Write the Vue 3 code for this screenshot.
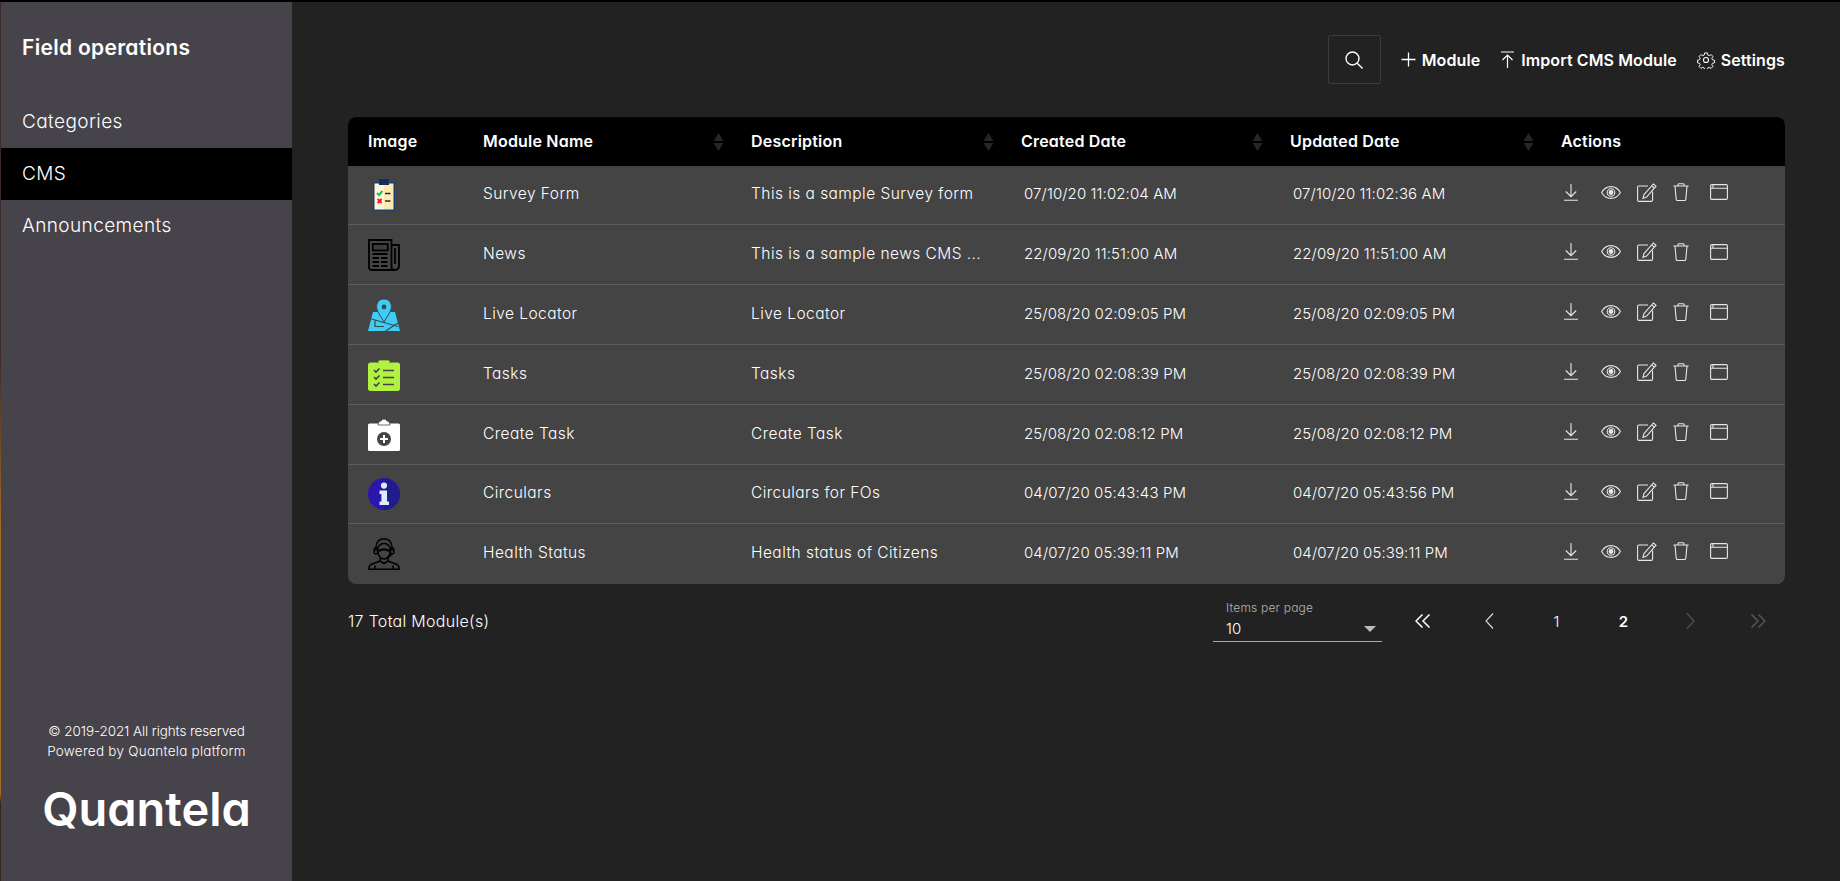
<template>
  <div class="app">
    <aside class="sidebar">
      <h1 class="title">Field operations</h1>
      <nav class="menu">
        <a
          v-for="item in menu"
          :key="item"
          class="menu-item"
          :class="{ active: item === 'CMS' }"
        >
          {{ item }}
        </a>
      </nav>
      <div class="side-footer">
        <p class="copyright">© 2019-2021 All rights reserved</p>
        <p>Powered by Quantela platform</p>
        <div class="logo">Quantela</div>
      </div>
    </aside>

    <main class="content">
      <div class="toolbar">
        <button class="search-btn">
          <svg width="20" height="20" viewBox="0 0 20 20" fill="none" stroke="#fff" stroke-width="1.4">
            <circle cx="8.5" cy="8.5" r="6.5" />
            <path d="M13.2 13.2 L18.6 18.6" />
          </svg>
        </button>
        <a class="tool">
          <svg width="15" height="15" viewBox="0 0 15 15" fill="none" stroke="#fff" stroke-width="1.3">
            <path d="M7.5 0.5 V14.5 M0.5 7.5 H14.5" />
          </svg>
          Module
        </a>
        <a class="tool">
          <svg width="15" height="18" viewBox="0 0 15 18" fill="none" stroke="#fff" stroke-width="1.2">
            <path d="M1 1 H14 M7.5 17 V4 M2.5 9 L7.5 4 L12.5 9" />
          </svg>
          Import CMS Module
        </a>
        <a class="tool">
          <svg width="18" height="18" viewBox="0 0 24 24" fill="none" stroke="#fff" stroke-width="1.4" stroke-linejoin="round">
            <circle cx="12" cy="12" r="3.4" />
            <path d="M10 1.5 h4 l.6 3.1 2.2 1 2.7-1.7 2.8 2.9 -1.7 2.6 .9 2.2 3 .6 v4 l-3 .6 -.9 2.2 1.7 2.6 -2.8 2.9 -2.7-1.7 -2.2 1 -.6 3.1 h-4 l-.6-3.1 -2.2-1 -2.7 1.7 -2.8-2.9 1.7-2.6 -.9-2.2 -3-.6 v-4 l3-.6 .9-2.2 -1.7-2.6 2.8-2.9 2.7 1.7 2.2-1 z" transform="translate(1.2 1.2) scale(.9)" />
          </svg>
          Settings
        </a>
      </div>

      <table class="grid">
        <colgroup>
          <col class="c-image" />
          <col class="c-name" />
          <col class="c-desc" />
          <col class="c-created" />
          <col class="c-updated" />
          <col class="c-actions" />
        </colgroup>
        <thead>
          <tr>
            <th class="first"><span class="th-label">Image</span></th>
            <th v-for="h in sortable" :key="h">
              <div class="th-inner">
                <span class="th-label">{{ h }}</span>
                <svg class="sort" width="11" height="20" viewBox="0 0 11 20" fill="#262626">
                  <path d="M5.5 1 L10.5 9 H0.5 Z M0.5 11 H10.5 L5.5 19 Z" />
                </svg>
              </div>
            </th>
            <th><span class="th-label">Actions</span></th>
          </tr>
        </thead>
        <tbody>
          <tr v-for="row in rows" :key="row.name">
            <td class="first">
              <!-- module pictures -->
              <svg v-if="row.icon === 'survey'" class="thumb" viewBox="0 0 32 32">
                <rect x="5" y="3" width="22" height="29" rx="1" fill="#1a3f72" />
                <rect x="6.5" y="4.5" width="9.5" height="26" fill="#fff6d8" />
                <rect x="16" y="4.5" width="9.5" height="26" fill="#ffe7ae" />
                <rect x="11" y="0" width="10" height="6" fill="#12305e" />
                <path d="M9 14 l2 2 3.5-4" stroke="#17c45a" stroke-width="1.9" fill="none" />
                <path d="M9.6 20 l4 4 M13.6 20 l-4 4" stroke="#f01c1c" stroke-width="1.9" />
                <path d="M17 14.5 h5.5 M17 22 h5.5" stroke="#12305e" stroke-width="1.5" />
              </svg>
              <svg v-else-if="row.icon === 'news'" class="thumb" viewBox="0 0 32 32" fill="none" stroke="#000" stroke-width="1.8">
                <path d="M26 31 H3.5 Q1 31 1 28 V1 H23.5 V28 Q23.5 31 26 31 Q31 31 31 27 V6 H23.5" />
                <path d="M27 9 V25" />
                <rect x="4.8" y="5" width="15" height="6.5" fill="#3d3d3d" />
                <path d="M4.5 15 h15 M4.5 19 h6.5 M13 19 h6.5 M4.5 23 h6.5 M13 23 h6.5 M4.5 27 h6.5 M13 27 h6.5" stroke-width="2" />
              </svg>
              <svg v-else-if="row.icon === 'locator'" class="thumb" viewBox="0 0 32 32">
                <path d="M5 13 H27 L32 32 H0 Z" fill="#3ecdf6" />
                <path d="M3.5 20 L30 27.5 M17.5 32 L30 24 M7 21 V27.5 H16" fill="none" stroke="#444" stroke-width="1.2" />
                <path d="M16 0 C10.8 0 8.6 4 8.6 7.8 C8.6 12.5 13 17.5 16 23 C19 17.5 23.4 12.5 23.4 7.8 C23.4 4 21.2 0 16 0 Z" fill="#3ecdf6" stroke="#444" stroke-width="1" />
                <circle cx="16" cy="8" r="2.4" fill="#444" />
              </svg>
              <svg v-else-if="row.icon === 'tasks'" class="thumb" viewBox="0 0 32 32">
                <rect x="0" y="3.5" width="32" height="28.5" rx="2.5" fill="#b1f142" />
                <path d="M10 4 V2.5 Q10 1 12 1 H20 Q22 1 22 2.5 V4" fill="#b1f142" stroke="#444" stroke-width=".7" />
                <path d="M6 11 l2 2 3.5-3.5 M6 18 l2 2 3.5-3.5 M6 25 l2 2 3.5-3.5" fill="none" stroke="#444" stroke-width="1.6" />
                <path d="M15 11.5 H26 M15 18.5 H26 M15 25.5 H26" stroke="#444" stroke-width="1.6" />
              </svg>
              <svg v-else-if="row.icon === 'create'" class="thumb" viewBox="0 0 32 32">
                <rect x="0" y="4.5" width="32" height="27.5" rx="1.5" fill="#fff" />
                <path d="M10 6 Q10 2 13 2 Q14 0 16 0 Q18 0 19 2 Q22 2 22 6 Z" fill="#fff" stroke="#444" stroke-width=".8" />
                <circle cx="16" cy="20" r="7" fill="#444" />
                <path d="M16 16 V24 M12 20 H20" stroke="#fff" stroke-width="2" />
              </svg>
              <svg v-else-if="row.icon === 'info'" class="thumb" viewBox="0 0 32 32">
                <circle cx="16" cy="16" r="16" fill="#2a15ad" />
                <path d="M16 0 A16 16 0 0 1 16 32 Z" fill="#231a8f" />
                <circle cx="16" cy="7.6" r="3.1" fill="#d9eeff" />
                <path d="M11.5 12.5 H19 V23.5 H21 V27 H11.5 V23.5 H13.4 V16 H11.5 Z" fill="#d9eeff" />
              </svg>
              <svg v-else class="thumb" viewBox="0 0 32 32" fill="none" stroke="#000" stroke-width="1.5">
                <path d="M8 13 V9 C8 3.5 12 .8 16 .8 C20 .8 24 3.5 24 9 V13" />
                <path d="M10 10 C11 7 13 5.5 16 5.5 C19 5.5 21 7 22 10 V14 C22 18 19 21 16 21 C13 21 10 18 10 14 Z" />
                <rect x="6.2" y="10" width="3.4" height="6" rx="1.4" />
                <rect x="22.4" y="10" width="3.4" height="6" rx="1.4" />
                <path d="M12 20 V23 L16 25.5 L20 23 V20 M12 23 L3 26.5 Q.8 27.5 .7 31.3 H31.3 Q31.2 27.5 29 26.5 L20 23" />
                <path d="M7 27.5 V31 M25 27.5 V31 M24 15 Q23 19 18 20" />
                <path d="M11 13 Q16 9.5 21 13" stroke-width="2.2" />
              </svg>
            </td>
            <td>{{ row.name }}</td>
            <td>{{ row.desc }}</td>
            <td class="date">{{ row.created }}</td>
            <td class="date">{{ row.updated }}</td>
            <td>
              <div class="actions">
                <svg class="a-dl" width="14" height="17" viewBox="0 0 14 17" fill="none" stroke="#e6e6e6" stroke-width="1.1">
                  <path d="M7 0 V12.5 M1.8 7.5 L7 12.7 L12.2 7.5 M0 16.3 H14" />
                </svg>
                <svg class="a-eye" width="20" height="13" viewBox="0 0 20 13" fill="none" stroke="#e6e6e6" stroke-width="1.1">
                  <path d="M.6 6.5 C3 2.2 6.5 .6 10 .6 C13.5 .6 17 2.2 19.4 6.5 C17 10.8 13.5 12.4 10 12.4 C6.5 12.4 3 10.8 .6 6.5 Z" />
                  <circle cx="10" cy="6.5" r="3.8" />
                  <circle cx="10" cy="6.5" r="1.9" fill="#e6e6e6" />
                </svg>
                <svg class="a-edit" width="20" height="19" viewBox="0 0 20 19" fill="none" stroke="#e6e6e6" stroke-width="1.1">
                  <path d="M11 3 H1.8 Q.6 3 .6 4.2 V17 Q.6 18.4 1.8 18.4 H14.2 Q15.6 18.4 15.6 17 V8.5" />
                  <path d="M16.4 1 L19 3.2 L9.6 14 L6 15.4 L7 11.6 Z M14.8 3 L17.3 5.2" />
                </svg>
                <svg class="a-trash" width="16" height="18" viewBox="0 0 16 18" fill="none" stroke="#e6e6e6" stroke-width="1.1">
                  <path d="M.4 3 H15.6 M2 3 L3.2 16.4 Q3.3 17.5 4.5 17.5 H11.5 Q12.7 17.5 12.8 16.4 L14 3 M5 3 V1.6 Q5 .7 6 .7 H10 Q11 .7 11 1.6 V3" />
                </svg>
                <svg class="a-win" width="18" height="16" viewBox="0 0 18 16" fill="none" stroke="#e6e6e6" stroke-width="1.1">
                  <rect x=".6" y=".6" width="16.8" height="14.8" rx="1.2" />
                  <path d="M.6 4.2 H17.4 M3 .6 V4.2" />
                </svg>
              </div>
            </td>
          </tr>
        </tbody>
      </table>

      <div class="pager-row">
        <span class="total">17 Total Module(s)</span>
        <div class="pager">
          <div class="per-page">
            <label>Items per page</label>
            <div class="select-value">
              <span>10</span>
              <i class="caret"></i>
            </div>
          </div>
          <div class="pages">
            <a class="pg">
              <svg width="16" height="14" viewBox="0 0 16 14" fill="none" stroke="#fff" stroke-width="1.5"><path d="M7.5 .5 L1 7 L7.5 13.5 M14.5 .5 L8 7 L14.5 13.5" /></svg>
            </a>
            <a class="pg">
              <svg width="9" height="16" viewBox="0 0 9 16" fill="none" stroke="#ddd" stroke-width="1.1"><path d="M8 .5 L1 8 L8 15.5" /></svg>
            </a>
            <a class="pg num">1</a>
            <a class="pg num current">2</a>
            <a class="pg">
              <svg width="9" height="16" viewBox="0 0 9 16" fill="none" stroke="#555" stroke-width="1.1"><path d="M1 .5 L8 8 L1 15.5" /></svg>
            </a>
            <a class="pg">
              <svg width="16" height="14" viewBox="0 0 16 14" fill="none" stroke="#555" stroke-width="1.5"><path d="M1.5 .5 L8 7 L1.5 13.5 M8.5 .5 L15 7 L8.5 13.5" /></svg>
            </a>
          </div>
        </div>
      </div>
    </main>
  </div>
</template>

<script setup>
const menu = ["Categories", "CMS", "Announcements"];

const sortable = ["Module Name", "Description", "Created Date", "Updated Date"];

const rows = [
  { icon: "survey", name: "Survey Form", desc: "This is a sample Survey form", created: "07/10/20 11:02:04 AM", updated: "07/10/20 11:02:36 AM" },
  { icon: "news", name: "News", desc: "This is a sample news CMS ...", created: "22/09/20 11:51:00 AM", updated: "22/09/20 11:51:00 AM" },
  { icon: "locator", name: "Live Locator", desc: "Live Locator", created: "25/08/20 02:09:05 PM", updated: "25/08/20 02:09:05 PM" },
  { icon: "tasks", name: "Tasks", desc: "Tasks", created: "25/08/20 02:08:39 PM", updated: "25/08/20 02:08:39 PM" },
  { icon: "create", name: "Create Task", desc: "Create Task", created: "25/08/20 02:08:12 PM", updated: "25/08/20 02:08:12 PM" },
  { icon: "info", name: "Circulars", desc: "Circulars for FOs", created: "04/07/20 05:43:43 PM", updated: "04/07/20 05:43:56 PM" },
  { icon: "health", name: "Health Status", desc: "Health status of Citizens", created: "04/07/20 05:39:11 PM", updated: "04/07/20 05:39:11 PM" },
];
</script>

<style>
body {
  background: #222;
}
</style>

<style scoped>
.app {
  display: flex;
  height: 881px;
  box-sizing: border-box;
  border-top: 2px solid #000;
  background: #222;
  color: #fff;
  font-family: Inter, "Liberation Sans", sans-serif;
  font-feature-settings: "cv11";
  overflow: hidden;
}

.sidebar {
  width: 291px;
  flex-shrink: 0;
  display: flex;
  flex-direction: column;
  background: #47434a;
  border-left: 1px solid;
  border-image: linear-gradient(#3a2a2a 0, #3a2a2a 40%, #a86a20 60%, #a86a20 90%, #33261f 91%) 1;
}

.title {
  margin: 0;
  padding: 33px 21px 0;
  height: 61px;
  font-size: 21px;
  line-height: 26px;
  font-weight: 600;
  letter-spacing: 0.3px;
}

.menu {
  display: flex;
  flex-direction: column;
}

.menu-item {
  height: 52px;
  line-height: 51px;
  padding-left: 21px;
  font-size: 19px;
  font-weight: 300;
  letter-spacing: 0.4px;
}

.menu-item.active {
  background: #000;
}

.side-footer {
  margin-top: auto;
  padding-bottom: 45px;
  text-align: center;
  font-size: 13.5px;
  font-weight: 300;
  line-height: 20px;
  letter-spacing: 0.25px;
}

.side-footer p {
  margin: 0;
}

.side-footer .copyright {
  letter-spacing: -0.1px;
}

.logo {
  margin-top: 21px;
  font-size: 47px;
  line-height: 54px;
  font-weight: 600;
  letter-spacing: 0;
}

.content {
  flex: 1;
  padding: 33px 55px 0 56px;
  min-width: 0;
}

.toolbar {
  display: flex;
  justify-content: flex-end;
  align-items: center;
  height: 49px;
  margin-bottom: 33px;
}

.search-btn {
  width: 53px;
  height: 49px;
  margin-right: 20px;
  display: flex;
  align-items: center;
  justify-content: center;
  background: transparent;
  border: 1px solid #3c3c3c;
  border-radius: 2px;
}

.tool {
  display: flex;
  align-items: center;
  gap: 6px;
  margin-left: 20px;
  font-size: 16px;
  font-weight: 600;
  letter-spacing: 0.1px;
}

.search-btn + .tool {
  margin-left: 0;
}

.grid {
  width: 100%;
  table-layout: fixed;
  border-collapse: separate;
  border-spacing: 0;
  background: #444;
  border-radius: 8px;
  font-size: 15.5px;
  font-weight: 300;
  letter-spacing: 0.45px;
  color: #fff;
}

.c-image { width: 135px; }
.c-name { width: 268px; }
.c-desc { width: 270px; }
.c-created { width: 269px; }
.c-updated { width: 271px; }

th {
  height: 49px;
  padding: 0;
  background: #000;
  color: #fff;
  font-size: 16px;
  font-weight: 600;
  letter-spacing: 0.2px;
  text-align: left;
}

th:first-child { border-top-left-radius: 8px; }
th:last-child { border-top-right-radius: 8px; }

.th-inner {
  display: flex;
  justify-content: space-between;
  align-items: center;
  padding-right: 27px;
}

.th-label {
  display: block;
  margin-bottom: 2px;
}

td {
  box-sizing: border-box;
  height: 60px;
  padding: 0 0 3px;
  border-bottom: 1px solid #5c5c5c;
}

/* first and sixth row are a pixel shorter in the design */
tbody tr:nth-child(1) td,
tbody tr:nth-child(6) td {
  height: 59px;
}

tbody tr:last-child td {
  border-bottom: none;
}

td.first {
  padding: 0 0 0 20px;
}

th.first {
  padding-left: 20px;
}

.date {
  padding-left: 3px;
  font-size: 15px;
  letter-spacing: 0.1px;
}

.thumb {
  display: block;
  width: 32px;
  height: 32px;
}

.actions {
  display: flex;
  align-items: center;
  padding: 0 0 3px 3px;
}

.a-eye { margin-left: 23px; }
.a-edit { margin-left: 16px; }
.a-trash { margin-left: 16px; }
.a-win { margin-left: 21px; }

.pager-row {
  display: flex;
  justify-content: space-between;
  align-items: center;
  margin-top: 12px;
  height: 50px;
}

.total {
  font-size: 16px;
  font-weight: 300;
  letter-spacing: 0.3px;
}

.pager {
  display: flex;
  align-items: center;
}

.per-page {
  width: 169px;
  box-sizing: border-box;
  padding: 0 0 2px 13px;
  border-bottom: 1px solid #aaa;
}

.per-page label {
  display: block;
  margin-bottom: 4px;
  font-size: 12px;
  line-height: 15px;
  font-weight: 300;
  letter-spacing: 0.2px;
  color: #b5b5b5;
}

.select-value {
  display: flex;
  justify-content: space-between;
  align-items: center;
  font-size: 15px;
  font-weight: 300;
  line-height: 20px;
  padding-right: 6px;
}

.caret {
  width: 0;
  height: 0;
  border-left: 6px solid transparent;
  border-right: 6px solid transparent;
  border-top: 6px solid #bbb;
}

.pages {
  display: flex;
  margin: 0 -6px 0 7px;
}

.pg {
  width: 67px;
  height: 30px;
  display: flex;
  align-items: center;
  justify-content: center;
}

.num {
  font-size: 15px;
  font-weight: 300;
}

.current {
  font-weight: 600;
}
</style>
